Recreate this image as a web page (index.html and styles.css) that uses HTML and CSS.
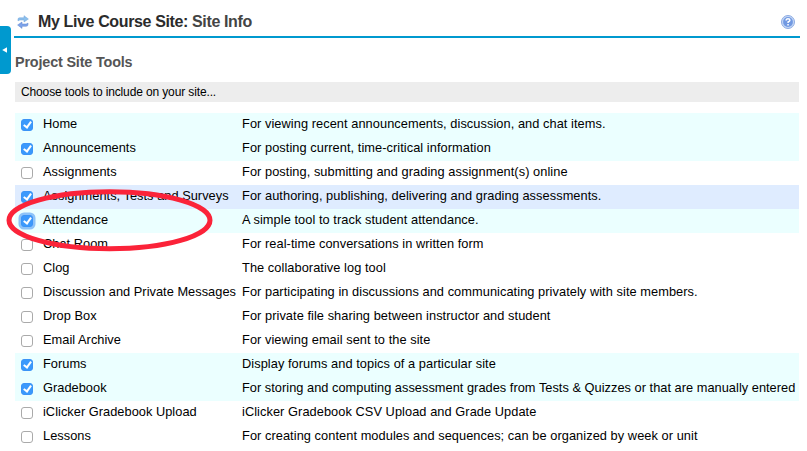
FILE: index.html
```html
<!DOCTYPE html>
<html lang="en">
<head>
<meta charset="utf-8">
<title>My Live Course Site: Site Info</title>
<link rel="stylesheet" href="styles.css">
</head>
<body>
<button class="nav-toggle" aria-label="Toggle menu"><svg width="5" height="6" viewBox="0 0 5 6"><path d="M5 .2v5.600L.2 3z" fill="#fff"/></svg></button>
<header class="title-bar">
  <svg class="reset" width="12" height="14" viewBox="0 0 12 14"><path d="M1 6V4.2Q1 2.8 2.8 2.8H7V.7L11.4 4 7 7V5H3.2Q1.8 5 1 6z" fill="#8cc0ed" stroke="#6fa3da" stroke-width=".5"/><path d="M11 8v1.5q0 1.8-1.8 1.8H5v2.1L.6 10 5 7v2h3.8Q10.2 9 11 8z" fill="#7ea3ea" stroke="#5f86cf" stroke-width=".5"/></svg>
  <h1><span class="site">My Live Course Site:</span> Site Info</h1>
  <svg class="help" width="14" height="14" viewBox="0 0 14 14"><circle cx="7" cy="7" r="6.5" fill="#c5d8f6" stroke="#8dabe2"/><circle cx="7" cy="7" r="4.9" fill="#7199e2"/><path d="M5.1 5.5q0-1.7 1.9-1.7t1.9 1.4Q8.900 6.200 7.100 7v1" fill="none" stroke="#fff" stroke-width="1.500"/><path d="M6.300 9h1.500v1.400H6.300z" fill="#fff"/></svg>
</header>
<main>
  <h2>Project Site Tools</h2>
  <p class="instruction">Choose tools to include on your site...</p>
  <div class="tools">
    <label class="tool on"><input type="checkbox" checked><span class="name">Home</span><span class="desc">For viewing recent announcements, discussion, and chat items.</span></label>
    <label class="tool on"><input type="checkbox" checked><span class="name">Announcements</span><span class="desc">For posting current, time-critical information</span></label>
    <label class="tool"><input type="checkbox"><span class="name">Assignments</span><span class="desc">For posting, submitting and grading assignment(s) online</span></label>
    <label class="tool hovered"><input type="checkbox" checked><span class="name">Assignments, Tests and Surveys</span><span class="desc">For authoring, publishing, delivering and grading assessments.</span></label>
    <label class="tool on focused"><input type="checkbox" checked><span class="name">Attendance</span><span class="desc">A simple tool to track student attendance.</span></label>
    <label class="tool"><input type="checkbox"><span class="name">Chat Room</span><span class="desc">For real-time conversations in written form</span></label>
    <label class="tool"><input type="checkbox"><span class="name">Clog</span><span class="desc">The collaborative log tool</span></label>
    <label class="tool"><input type="checkbox"><span class="name">Discussion and Private Messages</span><span class="desc">For participating in discussions and communicating privately with site members.</span></label>
    <label class="tool"><input type="checkbox"><span class="name">Drop Box</span><span class="desc">For private file sharing between instructor and student</span></label>
    <label class="tool"><input type="checkbox"><span class="name">Email Archive</span><span class="desc">For viewing email sent to the site</span></label>
    <label class="tool on"><input type="checkbox" checked><span class="name">Forums</span><span class="desc">Display forums and topics of a particular site</span></label>
    <label class="tool on"><input type="checkbox" checked><span class="name">Gradebook</span><span class="desc long">For storing and computing assessment grades from Tests &amp; Quizzes or that are manually entered</span></label>
    <label class="tool"><input type="checkbox"><span class="name">iClicker Gradebook Upload</span><span class="desc">iClicker Gradebook CSV Upload and Grade Update</span></label>
    <label class="tool"><input type="checkbox"><span class="name">Lessons</span><span class="desc">For creating content modules and sequences; can be organized by week or unit</span></label>
  </div>
</main>
<svg class="callout" width="208" height="66" viewBox="0 0 208 66"><ellipse cx="103.500" cy="32.300" rx="100.500" ry="28.500" fill="none" stroke="#fb2339" stroke-width="5"/></svg>
</body>
</html>
```
FILE: styles.css
```css
* { box-sizing: border-box; }
body {
  margin: 0;
  height: 451px;
  overflow: hidden;
  background: #fff;
  color: #000;
  font: 12.8px/16px "Liberation Sans", Arial, sans-serif;
}
.nav-toggle {
  position: absolute;
  left: 0;
  top: 26px;
  width: 11px;
  height: 48px;
  padding: 0 0 0 2px;
  border: 0;
  border-radius: 0 4px 4px 0;
  background: #0099cf;
  display: flex;
  align-items: center;
}
.title-bar {
  display: flex;
  align-items: center;
  height: 38px;
  margin: 0 7px 0 14px;
  padding: 8px 5px 0 3px;
  border-bottom: 2px solid #0099cf;
}
h1 {
  flex: 1;
  margin: 0 0 0 9px;
  font-size: 16px;
  line-height: 20px;
  letter-spacing: -.37px;
  color: #444;
}
.site { color: #2b2b2b; }
main { margin: 0 8px 0 15px; }
h2 {
  margin: 0;
  padding-top: 14px;
  height: 44px;
  font-size: 14.4px;
  line-height: 20px;
  letter-spacing: -.17px;
  color: #555;
}
.instruction {
  margin: 0 0 11px;
  padding: 2px 6px;
  height: 20px;
  background: #ededed;
  font-size: 12px;
  letter-spacing: -.13px;
}
.tool {
  display: grid;
  grid-template-columns: 22px 199px 1fr;
  height: 24px;
  padding: 3px 0 0 6px;
  white-space: nowrap;
}
.name { letter-spacing: .03px; }
.desc { letter-spacing: .06px; }
.long { letter-spacing: .025px; }
.on { background: #ebffff; }
.hovered { background: #dfecff; }
input {
  appearance: none;
  width: 12px;
  height: 12px;
  margin: 3px 0 0;
  border: 1px solid #aaa;
  border-radius: 3px;
  background: #fff;
}
input:checked {
  border-color: #3b94f7;
  background: #3b99fc;
}
input:checked::after {
  content: "";
  display: block;
  box-sizing: border-box;
  width: 5px;
  height: 8px;
  margin: 0 0 0 3px;
  border: solid #fff;
  border-width: 0 2px 2px 0;
  transform: rotate(36deg);
}
.focused input { box-shadow: 0 0 0 2.5px #8dc3f8; }
.callout {
  position: absolute;
  left: 6px;
  top: 188px;
}
```
